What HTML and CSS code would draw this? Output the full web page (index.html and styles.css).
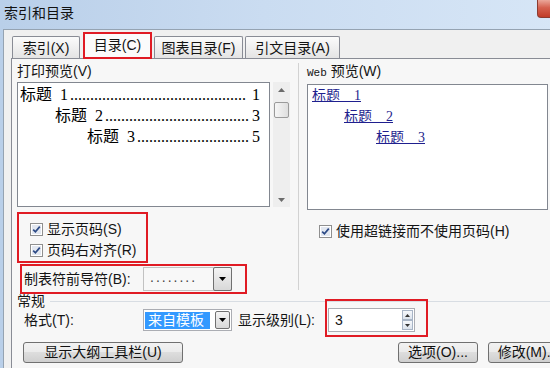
FILE: index.html
```html
<!DOCTYPE html>
<html lang="zh-CN">
<head>
<meta charset="utf-8"/>
<title>索引和目录</title>
<link rel="stylesheet" href="styles.css">
</head>
<body>
<div class="window">
  <div class="titlebar">
    <span class="title">索引和目录</span>
    <span class="close"></span>
  </div>
  <div class="client">
    <div class="tabs">
      <div class="tab tab-index">索引(X)</div>
      <div class="tab tab-toc active">目录(C)</div>
      <div class="tab tab-fig">图表目录(F)</div>
      <div class="tab tab-cite">引文目录(A)</div>
    </div>
    <div class="panel">
      <div class="columns">
        <div class="col-left">
          <div class="caption">打印预览(V)</div>
          <div class="preview-row">
            <div class="preview">
              <div class="toc-line"><span class="toc-name">标题&ensp;1</span><span class="dots">............................................</span><span class="page">1</span></div>
              <div class="toc-line toc-l2"><span class="toc-name">标题&ensp;2</span><span class="dots">....................................</span><span class="page">3</span></div>
              <div class="toc-line toc-l3"><span class="toc-name">标题&ensp;3</span><span class="dots">............................</span><span class="page">5</span></div>
            </div>
            <div class="scrollbar">
              <svg width="7" height="4" viewBox="0 0 7 4"><path d="M0 4 3.5 0 7 4Z" fill="#6b6b6b"/></svg>
              <div class="sb-thumb"></div>
              <div class="sb-track"></div>
              <svg width="7" height="4" viewBox="0 0 7 4"><path d="M0 0 3.5 4 7 0Z" fill="#6b6b6b"/></svg>
            </div>
          </div>
          <div class="mark checks">
            <label class="check">
              <svg class="cb" width="13" height="13" viewBox="0 0 13 13"><rect x=".5" y=".5" width="12" height="12" fill="#fff" stroke="#8f8f8f"/><rect x="2" y="2" width="9" height="9" fill="#e2e7f0"/><path d="M3.2 6.6 5.4 8.8 9.8 3.6" fill="none" stroke="#2c4a86" stroke-width="1.7"/></svg>
              显示页码(S)
            </label>
            <label class="check">
              <svg class="cb" width="13" height="13" viewBox="0 0 13 13"><rect x=".5" y=".5" width="12" height="12" fill="#fff" stroke="#8f8f8f"/><rect x="2" y="2" width="9" height="9" fill="#e2e7f0"/><path d="M3.2 6.6 5.4 8.8 9.8 3.6" fill="none" stroke="#2c4a86" stroke-width="1.7"/></svg>
              页码右对齐(R)
            </label>
          </div>
          <div class="mark leader">
            <span class="field-label">制表符前导符(B):</span>
            <div class="combo combo-leader">
              <span class="combo-text leader-dots">........</span>
              <span class="combo-btn"><svg width="7" height="4" viewBox="0 0 7 4"><path d="M0 0 3.5 4 7 0Z" fill="#000"/></svg></span>
            </div>
          </div>
        </div>
        <div class="col-right">
          <div class="caption"><span class="mono">Web</span> 预览(W)</div>
          <div class="webbox">
            <div class="web-link"><span>标题&emsp;1</span></div>
            <div class="web-link web-l2"><span>标题&emsp;2</span></div>
            <div class="web-link web-l3"><span>标题&emsp;3</span></div>
          </div>
          <label class="check check-web">
            <svg class="cb" width="13" height="13" viewBox="0 0 13 13"><rect x=".5" y=".5" width="12" height="12" fill="#fff" stroke="#8f8f8f"/><rect x="2" y="2" width="9" height="9" fill="#e2e7f0"/><path d="M3.2 6.6 5.4 8.8 9.8 3.6" fill="none" stroke="#2c4a86" stroke-width="1.7"/></svg>
            使用超链接而不使用页码(H)
          </label>
        </div>
      </div>
      <div class="group"><span class="group-title">常规</span><span class="group-line"></span></div>
      <div class="format-row">
        <span class="field-label">格式(T):</span>
        <div class="combo combo-format">
          <span class="combo-text"><span class="sel">来自模板</span></span>
          <span class="combo-btn"><svg width="7" height="4" viewBox="0 0 7 4"><path d="M0 0 3.5 4 7 0Z" fill="#000"/></svg></span>
        </div>
        <span class="level-label">显示级别(L):</span>
        <div class="mark spin-mark">
          <div class="spin">
            <span class="spin-value">3</span>
            <span class="spin-btns">
              <span class="spin-btn"><svg width="5" height="3" viewBox="0 0 5 3"><path d="M0 3 2.5 0 5 3Z" fill="#333"/></svg></span>
              <span class="spin-btn"><svg width="5" height="3" viewBox="0 0 5 3"><path d="M0 0 2.5 3 5 0Z" fill="#333"/></svg></span>
            </span>
          </div>
        </div>
      </div>
      <div class="button-row">
        <button class="btn btn-outline">显示大纲工具栏(U)</button>
        <button class="btn btn-options">选项(O)...</button>
        <button class="btn btn-modify">修改(M)...</button>
      </div>
    </div>
  </div>
</div>
</body>
</html>
```

FILE: styles.css
```css
* {
  box-sizing: border-box;
}

body {
  margin: 0;
  width: 550px;
  height: 368px;
  overflow: hidden;
  background: #f0f0f0;
  font-family: "Liberation Sans", "Noto Sans CJK SC", sans-serif;
  font-size: 14px;
  color: #141414;
}

.window {
  width: 586px;
  height: 368px;
  background: linear-gradient(90deg, #b9cfe9, #cadcf1 45%, #d8e7f7);
}

.titlebar {
  height: 29px;
  display: flex;
  align-items: flex-start;
  padding-left: 4px;
}

.title {
  margin-top: 5px;
  line-height: 16px;
  color: #111;
}

.close {
  margin-left: auto;
  margin-right: 6px;
  width: 43px;
  height: 18px;
  border: 1px solid #8c3b30;
  border-top: none;
  border-radius: 0 0 4px 4px;
  background: linear-gradient(#eba79a, #d5614f 45%, #c13c28);
}

.client {
  margin-left: 3px;
  height: 339px;
  border-top: 1px solid #95a3b2;
  border-left: 1px solid #95a3b2;
  background: #f0f0f0;
}

/* tabs */
.tabs {
  display: flex;
  align-items: flex-end;
  height: 29px;
  padding: 2px 0 0 8px;
  margin-bottom: -1px;
}

.tab {
  height: 22px;
  margin-bottom: 1px;
  padding-top: 1px;
  border: 1px solid #898c95;
  border-bottom: none;
  border-radius: 2px 2px 0 0;
  background: linear-gradient(#fbfbfb, #e4e4e4);
  line-height: 20px;
  text-align: center;
}

.tab-index {
  width: 68px;
}

.tab.active {
  position: relative;
  z-index: 1;
  width: 69px;
  height: 27px;
  margin: 0 0 0 3px;
  padding-top: 0;
  border: 2px solid #e01b24;
  border-radius: 0;
  background: #fbfbfb;
  line-height: 23px;
}

.tab-fig {
  width: 89px;
  margin-left: 2px;
}

.tab-cite {
  width: 95px;
  margin-left: 2px;
}

/* tab page */
.panel {
  margin: 0 4px 0 7px;
  height: 311px;
  padding: 4px 6px 0 5px;
  border: 1px solid #898c95;
  border-bottom: none;
  background: #f7f7f7;
}

.columns {
  display: flex;
}

.col-left {
  width: 273px;
}

.caption {
  line-height: 16px;
  margin-bottom: 3px;
}

.mono {
  font-family: "Liberation Mono", monospace;
  font-size: 11px;
}

.preview-row {
  display: flex;
}

.preview {
  width: 253px;
  height: 125px;
  padding: 1px 9px 0 2px;
  border: 1px solid #828790;
  background: #fff;
  font-family: "Liberation Serif", "Noto Sans CJK SC", serif;
  font-size: 16px;
  color: #000;
}

.toc-line {
  display: flex;
  height: 21px;
  line-height: 21px;
  white-space: nowrap;
}

.toc-l2 {
  padding-left: 35px;
}

.toc-l3 {
  padding-left: 67px;
}

.dots {
  margin-left: 2px;
}

.page {
  margin-left: auto;
}

.scrollbar {
  width: 17px;
  height: 125px;
  margin-left: 3px;
  padding: 6px 0 5px;
  display: flex;
  flex-direction: column;
  align-items: center;
  background: #eeeeee;
}

.scrollbar svg {
  flex: none;
}

.sb-thumb {
  width: 15px;
  height: 16px;
  margin-top: 10px;
  border: 1px solid #9a9a9a;
  border-radius: 2px;
  background: linear-gradient(90deg, #f6f6f6, #dedede);
}

.sb-track {
  flex: 1;
}

/* red highlight boxes */
.mark {
  border: 2px solid #e01b24;
}

.checks {
  width: 131px;
  height: 51px;
  margin-top: 5px;
  padding: 5px 0 0 11px;
}

.check {
  display: flex;
  align-items: center;
  height: 21px;
  line-height: 21px;
  white-space: nowrap;
}

.cb {
  flex: none;
  margin-right: 4px;
}

.leader {
  display: flex;
  align-items: center;
  width: 227px;
  height: 30px;
  margin: 1px 0 0 3px;
  padding-left: 2px;
}

.field-label {
  flex: none;
  width: 119px;
  line-height: 16px;
}

.combo {
  display: flex;
  border: 1px solid #abadb3;
  background: #fff;
}

.combo-text {
  flex: 1;
  display: flex;
  align-items: center;
}

.combo-btn {
  display: flex;
  align-items: center;
  justify-content: center;
  border: 1px solid #707070;
  border-radius: 2px;
  background: linear-gradient(#f4f4f4, #d8d8d8);
}

.combo-leader {
  width: 89px;
  height: 24px;
  border-color: #c2c2c2;
  background: #f8f8f8;
}

.combo-leader .combo-btn {
  width: 19px;
  margin: -1px -1px -1px 0;
}

.leader-dots {
  padding: 0 0 4px 6px;
  letter-spacing: 2px;
  color: #444;
}

/* right column */
.col-right {
  flex: 1;
  margin: 0 0 4px 8px;
  padding-left: 8px;
  border-left: 1px solid #d2d2d2;
}

.webbox {
  width: 241px;
  height: 126px;
  padding: 0 0 0 4px;
  border: 1px solid #828790;
  background: #fff;
  font-family: "Liberation Serif", "Noto Sans CJK SC", serif;
  font-size: 14px;
  color: #1f1f8e;
}

.web-link {
  height: 21px;
  line-height: 21px;
}

.web-link span {
  text-decoration: underline;
}

.web-l2 {
  padding-left: 32px;
}

.web-l3 {
  padding-left: 64px;
}

.check-web {
  margin-top: 11px;
  padding-left: 12px;
}

/* general group */
.group {
  display: flex;
  align-items: center;
  height: 16px;
  margin-top: -1px;
  line-height: 16px;
}

.group-line {
  flex: 1;
  margin-left: 5px;
  border-top: 1px solid #d8dde3;
}

.format-row {
  display: flex;
  align-items: center;
  height: 22px;
  padding-left: 7px;
}

.combo-format {
  width: 89px;
  height: 22px;
  padding: 1px;
}

.sel {
  width: 65px;
  height: 17px;
  padding-left: 3px;
  line-height: 17px;
  background: #3399ff;
  color: #fff;
}

.combo-format .combo-btn {
  width: 15px;
  margin-left: 5px;
}

.level-label {
  flex: none;
  width: 81px;
  margin-left: 6px;
  line-height: 16px;
}

.spin-mark {
  margin: -10px 0 -6px 6px;
  padding: 7px 11px 3px 1px;
}

.spin {
  display: flex;
  align-items: center;
  width: 87px;
  height: 24px;
  padding-left: 6px;
  border: 1px solid #abadb3;
  background: #fff;
}

.spin-btns {
  display: flex;
  flex-direction: column;
  margin: 0 1px 0 auto;
}

.spin-btn {
  display: flex;
  align-items: center;
  justify-content: center;
  width: 11px;
  height: 10px;
  border: 1px solid #a9b5c6;
  background: linear-gradient(#f6f8fb, #dce3ec);
}

/* buttons */
.button-row {
  display: flex;
  margin-top: 11px;
  padding: 0 7px 0 6px;
}

.btn {
  height: 21px;
  padding: 0;
  border: 1px solid #707070;
  border-radius: 3px;
  background: linear-gradient(#f2f2f2, #ebebeb 45%, #dddddd 50%, #cfcfcf);
  font-family: inherit;
  font-size: 14px;
  line-height: 19px;
  color: #111;
}

.btn-outline {
  width: 160px;
}

.btn-options {
  width: 80px;
  margin-left: auto;
}

.btn-modify {
  width: 80px;
  margin-left: 10px;
}
```
